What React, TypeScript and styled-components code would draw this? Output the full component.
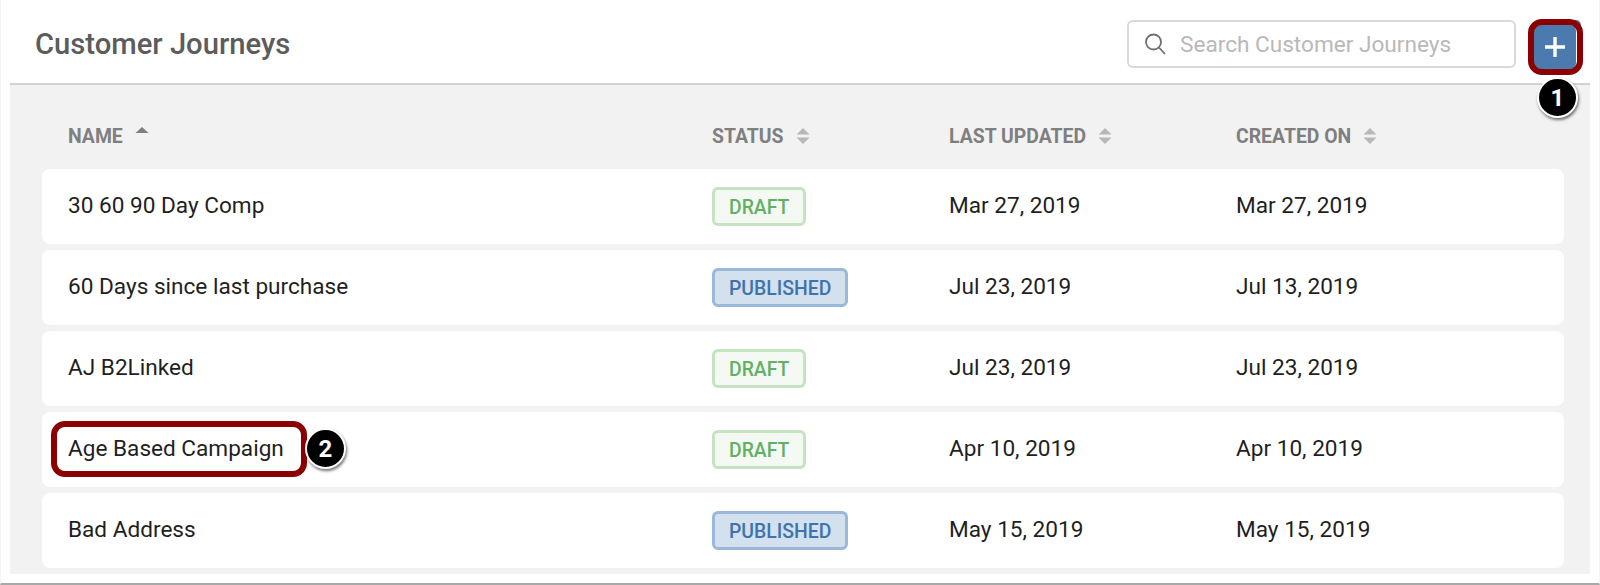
import * as React from 'react'
import styled, { createGlobalStyle } from 'styled-components'

const GlobalStyle = createGlobalStyle`
  html, body {
    margin: 0;
    padding: 0;
    background: #fff;
    font-family: Roboto, "Liberation Sans", sans-serif;
  }
`

const Page = styled.div`
  position: relative;
  box-sizing: border-box;
  width: 1600px;
  height: 585px;
  overflow: hidden;
  padding: 0 10px 9px;
  background: #fff;
  border-left: 1px solid #f4f4f4;
  border-right: 1px solid #f4f4f4;
  border-bottom: 2px solid #a9a9a9;
`

const Header = styled.div`
  display: flex;
  align-items: center;
  box-sizing: border-box;
  height: 85px;
  padding: 5px 14px 0 25px;
  margin: 0 -1px;
  border-bottom: 2px solid #d2d2d2;
`

const Title = styled.h1`
  flex: 1;
  margin: 0;
  font-size: 29.2px;
  font-weight: 500;
  color: #5c5c5c;
`

const SearchBox = styled.div`
  display: flex;
  align-items: center;
  box-sizing: border-box;
  width: 389px;
  height: 48px;
  padding-left: 15px;
  gap: 14px;
  border: 2px solid #d9d9d9;
  border-radius: 6px;
  margin-right: 18px;
  font-size: 22.6px;
  color: #b9b9b9;
`

const AddButton = styled.button`
  display: flex;
  align-items: center;
  justify-content: center;
  width: 42px;
  height: 44px;
  margin-top: 6px;
  padding: 0;
  border: 0;
  border-radius: 6px;
  background: #4a7aae;
`

const Body = styled.div`
  box-sizing: border-box;
  height: 489px;
  margin: 0 -1px;
  padding: 0 26px 0 32px;
  background: #f2f2f2;
`

const Columns = styled.div`
  display: grid;
  grid-template-columns: 644px 237px 287px 1fr;
  align-items: center;
  padding-left: 26px;
`

const HeadRow = styled(Columns)`
  box-sizing: border-box;
  height: 84px;
  padding-top: 18px;
`

const HeadCell = styled.div`
  display: flex;
  align-items: center;
  gap: 12px;
  font-size: 19.4px;
  font-weight: 700;
  color: #7f7f7f;
`

const Rows = styled.div`
  display: flex;
  flex-direction: column;
  gap: 6px;
`

const Row = styled(Columns)`
  height: 75px;
  padding-bottom: 3px;
  box-sizing: border-box;
  background: #fff;
  border-radius: 8px;
  font-size: 22.6px;
  color: #1f1f1f;
`

const StatusCell = styled.div`
  margin-top: 3px;
`

const Badge = styled.span<{ $published?: boolean }>`
  display: inline-flex;
  align-items: center;
  box-sizing: border-box;
  height: 39px;
  padding: 1px 13.5px 0 14px;
  border: 3px solid ${p => (p.$published ? '#9ab8d8' : '#c5e2c3')};
  border-radius: 6px;
  background: ${p => (p.$published ? '#d3e0ee' : '#f4f9f3')};
  color: ${p => (p.$published ? '#3f73ad' : '#62b064')};
  font-size: 19.4px;
  font-weight: 500;
`

const Outline = styled.div`
  position: absolute;
  box-sizing: border-box;
  border: 6px solid #8b0000;
`

const PlusOutline = styled(Outline)`
  left: 1527px;
  top: 19px;
  width: 55px;
  height: 56px;
  border-radius: 14px;
`

const NameOutline = styled(Outline)`
  left: 50px;
  top: 421px;
  width: 256px;
  height: 56px;
  border-radius: 14px;
`

const Marker = styled.div`
  position: absolute;
  display: flex;
  align-items: center;
  justify-content: center;
  box-sizing: border-box;
  width: 41px;
  height: 41px;
  border: 2px solid #fff;
  border-radius: 50%;
  background: #000;
  color: #fff;
  font-size: 24px;
  font-weight: 700;
  box-shadow: 1px 2px 3px rgba(0, 0, 0, 0.55);
`

const MarkerOne = styled(Marker)`
  left: 1536px;
  top: 77px;
`

const MarkerTwo = styled(Marker)`
  left: 304px;
  top: 428px;
`

const BlueTip = styled.div`
  position: absolute;
  left: 1572px;
  top: 20px;
  width: 8px;
  height: 8px;
  border-radius: 0 5px 0 0;
  background: #4a7aae;
`

const SortIcon = ({ up }: { up?: boolean }) =>
  up ? (
    <svg width="14" height="16" viewBox="0 0 14 16" style={{ marginTop: -8 }}>
      <path d="M7 3 L13.5 9 H0.5 Z" fill="#7f7f7f" />
    </svg>
  ) : (
    <svg width="14" height="18" viewBox="0 0 14 18">
      <path d="M7 1 L13.5 7.5 H0.5 Z M7 17 L13.5 10.5 H0.5 Z" fill="#b8b8b8" />
    </svg>
  )

const SearchIcon = () => (
  <svg width="22" height="24" viewBox="0 0 22 24" fill="none" stroke="#707070" strokeWidth="1.8">
    <circle cx="9.5" cy="10" r="7.5" />
    <path d="M15 15.5 L21 22" />
  </svg>
)

const PlusIcon = () => (
  <svg width="20" height="20" viewBox="0 0 20 20" stroke="#fff" strokeWidth="3.4">
    <path d="M10 0 V20 M0 10 H20" />
  </svg>
)

const journeys = [
  { name: '30 60 90 Day Comp', published: false, updated: 'Mar 27, 2019', created: 'Mar 27, 2019' },
  { name: '60 Days since last purchase', published: true, updated: 'Jul 23, 2019', created: 'Jul 13, 2019' },
  { name: 'AJ B2Linked', published: false, updated: 'Jul 23, 2019', created: 'Jul 23, 2019' },
  { name: 'Age Based Campaign', published: false, updated: 'Apr 10, 2019', created: 'Apr 10, 2019' },
  { name: 'Bad Address', published: true, updated: 'May 15, 2019', created: 'May 15, 2019' }
]

export default function App() {
  return (
    <Page>
      <GlobalStyle />
      <Header>
        <Title>Customer Journeys</Title>
        <SearchBox>
          <SearchIcon />
          Search Customer Journeys
        </SearchBox>
        <AddButton aria-label="Add">
          <PlusIcon />
        </AddButton>
      </Header>
      <Body>
        <HeadRow>
          <HeadCell>NAME <SortIcon up /></HeadCell>
          <HeadCell>STATUS <SortIcon /></HeadCell>
          <HeadCell>LAST UPDATED <SortIcon /></HeadCell>
          <HeadCell>CREATED ON <SortIcon /></HeadCell>
        </HeadRow>
        <Rows>
          {journeys.map(j => (
            <Row key={j.name}>
              <div>{j.name}</div>
              <StatusCell>
                <Badge $published={j.published}>{j.published ? 'PUBLISHED' : 'DRAFT'}</Badge>
              </StatusCell>
              <div>{j.updated}</div>
              <div>{j.created}</div>
            </Row>
          ))}
        </Rows>
      </Body>
      <BlueTip />
      <PlusOutline />
      <NameOutline />
      <MarkerOne>1</MarkerOne>
      <MarkerTwo>2</MarkerTwo>
    </Page>
  )
}
